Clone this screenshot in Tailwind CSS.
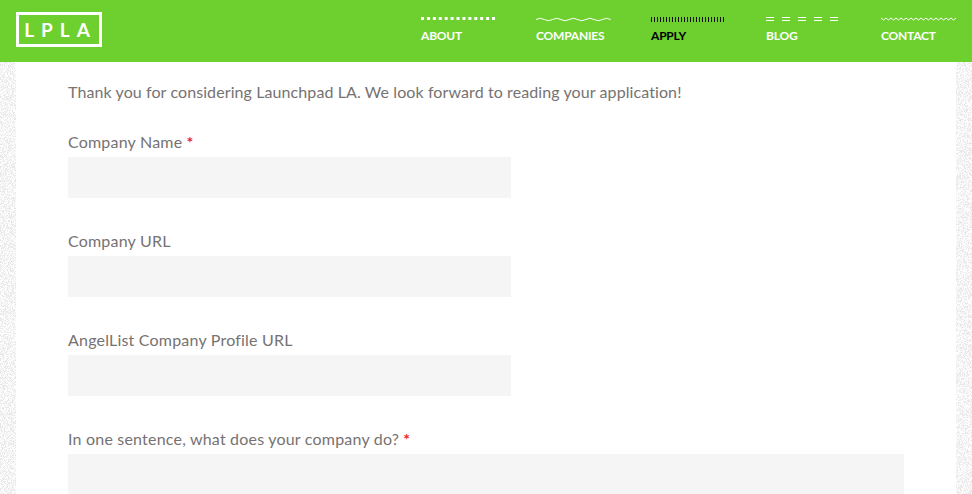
<!DOCTYPE html>
<html>
<head>
<meta charset="utf-8">
<script src="https://cdn.jsdelivr.net/npm/@tailwindcss/browser@4"></script>
</head>
<body class="relative h-[494px] overflow-hidden bg-white font-['Lato','Liberation_Sans',sans-serif]">
<svg class="absolute inset-0 h-[494px] w-[972px]" aria-hidden="true">
  <defs>
    <filter id="noise" x="0" y="0" width="100%" height="100%">
      <feTurbulence type="fractalNoise" baseFrequency="1.3" numOctaves="2" seed="4"/>
      <feColorMatrix type="matrix" values="0 0 0 0 0.8  0 0 0 0 0.8  0 0 0 0 0.8  5 0 0 0 -2.1"/>
    </filter>
  </defs>
  <rect x="0" y="62" width="16" height="432" filter="url(#noise)"/>
  <rect x="956" y="62" width="16" height="432" filter="url(#noise)"/>
</svg>
<header class="relative flex h-[62px] items-start justify-between bg-[#6dd02f] pl-4">
  <div class="mt-3 flex h-[35px] w-[86px] items-center justify-center border-[3px] border-white pl-[3px] text-[19px] font-bold leading-none tracking-[7px] text-white">LPLA</div>
  <nav class="flex text-[12px] font-bold leading-none tracking-[-0.2px] text-white">
    <a class="flex w-[115px] flex-col gap-[8px] pt-[17px]">
      <svg class="h-[5px] w-[75px]"><defs><pattern id="p1" width="5.92" height="5" patternUnits="userSpaceOnUse"><rect width="3" height="3" fill="#fff"/></pattern></defs><rect width="74" height="5" fill="url(#p1)"/></svg>
      <span>ABOUT</span>
    </a>
    <a class="flex w-[115px] flex-col gap-[8px] pt-[17px]">
      <svg class="h-[5px] w-[75px]" fill="none" stroke="#fff"><path d="M0 2.5q4-2.5 8.3 0t8.3 0t8.3 0t8.3 0t8.3 0t8.3 0t8.3 0t8.3 0t8.3 0"/></svg>
      <span>COMPANIES</span>
    </a>
    <a class="flex w-[115px] flex-col gap-[8px] pt-[17px] text-black">
      <svg class="h-[5px] w-[75px]"><defs><pattern id="p3" width="3" height="5" patternUnits="userSpaceOnUse"><rect width="1" height="5" fill="#111"/></pattern></defs><rect width="75" height="5" fill="url(#p3)"/></svg>
      <span>APPLY</span>
    </a>
    <a class="flex w-[115px] flex-col gap-[8px] pt-[17px]">
      <svg class="h-[5px] w-[75px]"><defs><pattern id="p4" width="16" height="5" patternUnits="userSpaceOnUse"><rect width="8" height="1" fill="#fff"/><rect y="3" width="8" height="1" fill="#fff"/></pattern></defs><rect width="75" height="5" fill="url(#p4)"/></svg>
      <span>BLOG</span>
    </a>
    <a class="flex w-[91px] flex-col gap-[8px] pt-[17px]">
      <svg class="h-[5px] w-[75px]" fill="none" stroke="#fff"><path d="M0 1l2.5 2l2.5-2l2.5 2l2.5-2l2.5 2l2.5-2l2.5 2l2.5-2l2.5 2l2.5-2l2.5 2l2.5-2l2.5 2l2.5-2l2.5 2l2.5-2l2.5 2l2.5-2l2.5 2l2.5-2l2.5 2l2.5-2l2.5 2l2.5-2l2.5 2l2.5-2l2.5 2l2.5-2l2.5 2l2.5-2"/></svg>
      <span>CONTACT</span>
    </a>
  </nav>
</header>
<main class="relative mx-4 bg-white px-[52px] text-[16px] leading-5 tracking-[0.095px] text-[#767272]">
  <p class="pt-[20px]">Thank you for considering Launchpad LA. We look forward to reading your application!</p>
  <div class="mt-[30px] flex flex-col gap-[33px] tracking-[0.2px]">
    <div>
      <label class="block h-[25px]">Company Name <span class="font-bold text-[#e8262a]">*</span></label>
      <div class="h-[41px] w-[443px] bg-[#f5f5f5]"></div>
    </div>
    <div>
      <label class="block h-[25px]">Company URL</label>
      <div class="h-[41px] w-[443px] bg-[#f5f5f5]"></div>
    </div>
    <div>
      <label class="block h-[25px]">AngelList Company Profile URL</label>
      <div class="h-[41px] w-[443px] bg-[#f5f5f5]"></div>
    </div>
    <div>
      <label class="block h-[25px]">In one sentence, what does your company do? <span class="font-bold text-[#e8262a]">*</span></label>
      <div class="h-[41px] w-[836px] bg-[#f5f5f5]"></div>
    </div>
  </div>
</main>
</body>
</html>
